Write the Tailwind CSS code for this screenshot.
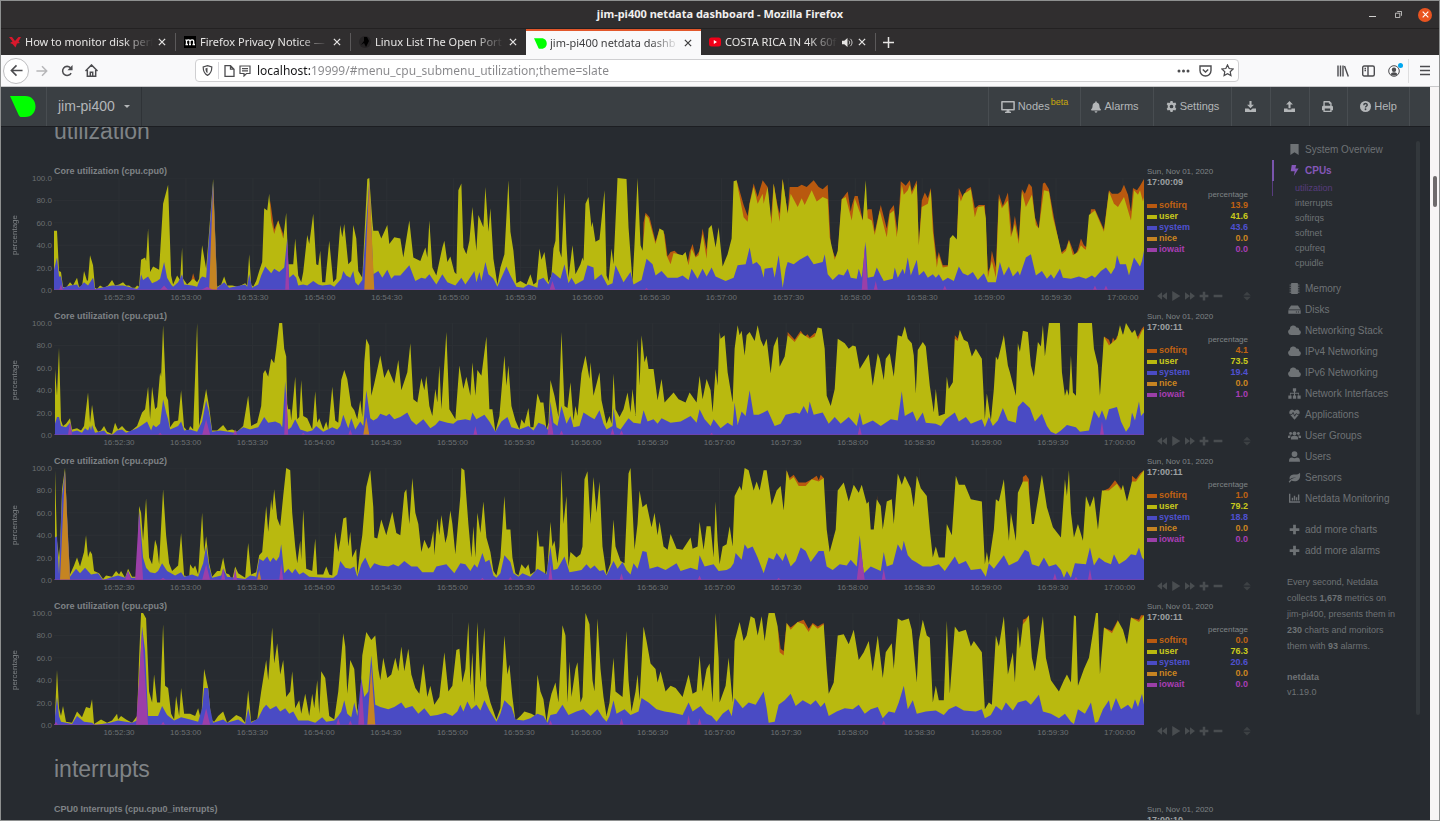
<!DOCTYPE html>
<html lang="en">
<head>
    <meta charset="UTF-8">
    <meta name="viewport" content="width=device-width, initial-scale=1.0">
    <title>jim-pi400 netdata dashboard</title>
    <script src="https://cdn.jsdelivr.net/npm/@tailwindcss/browser@4"></script>
</head>
<body class="bg-[#272b30] font-['Liberation_Sans',Arial,sans-serif] text-[#7f8386]">

    <!-- icon sprite -->
    <svg class="hidden" xmlns="http://www.w3.org/2000/svg">
        <symbol id="x" viewBox="0 0 16 16"><path d="M3 3l10 10M13 3L3 13" fill="none" stroke="currentColor" stroke-width="2"/></symbol>
        <symbol id="netdata" viewBox="0 0 26 21"><path d="M0 0h15c7 0 10.500 5 10.500 10.500S22 21 15 21h-4.500C9 20.500 8.500 18.500 7.500 16.500z" fill="#0f0"/></symbol>
        <symbol id="desktop" viewBox="0 0 16 14"><path fill-rule="evenodd" d="M1 0h14a1 1 0 011 1v9a1 1 0 01-1 1H9.500l.5 1.500h1.500V14h-7v-1.500H6L6.500 11H1a1 1 0 01-1-1V1a1 1 0 011-1zm.8 1.700v7.500h12.400V1.700z" fill="currentColor"/></symbol>
        <symbol id="bell" viewBox="0 0 14 16"><path d="M7 0a1 1 0 00-1 1v.600C3.500 2.200 2.200 4 2.200 6.500 2.200 9.500 1 10.200.4 11c-.8.9-.2 2 .8 2h11.600c1 0 1.600-1.100.8-2-.6-.8-1.800-1.500-1.800-4.500 0-2.500-1.300-4.300-3.800-4.900V1a1 1 0 00-1-1zM5 14a2 2 0 004 0z" fill="currentColor"/></symbol>
        <symbol id="cog" viewBox="0 0 16 16"><path fill-rule="evenodd" d="M6.500 0h3l.5 2.200 1.400.8 2.100-.7 1.500 2.600L13.400 6.400v1.700l0 1.500L15 11.100l-1.500 2.600-2.100-.7-1.400.8-.5 2.200h-3L6 13.800 4.600 13l-2.100.7L1 11.100l1.600-1.500V6.400L1 4.900l1.500-2.600 2.100.7L6 2.200zM8 5.300a2.700 2.700 0 100 5.400 2.700 2.700 0 000-5.400z" fill="currentColor"/></symbol>
        <symbol id="download" viewBox="0 0 16 16"><path d="M6.500 0h3v5.500h3.500L8 10.700 3 5.500h3.500zM0 11h5l3 2.500 3-2.500h5v5H0z" fill="currentColor"/></symbol>
        <symbol id="upload" viewBox="0 0 16 16"><path d="M6.500 10.500h3V5.200H13L8 0 3 5.200h3.500zM0 11h5.200v1.300h5.600V11H16v5H0z" fill="currentColor"/></symbol>
        <symbol id="print" viewBox="0 0 16 16"><path fill-rule="evenodd" d="M2 1a1 1 0 011-1h8l3 3v4a2 2 0 012 2v4.500h-2V16H2v-2.500H0V9a2 2 0 012-2zm2 1v5h8V4h-2V2zm0 9v3h8v-3z" fill="currentColor"/></symbol>
        <symbol id="help" viewBox="0 0 16 16"><circle cx="8" cy="8" r="8" fill="currentColor"/><path d="M5.500 6C5.500 3 10.500 3 10.500 5.800 10.500 7.800 8 7.500 8 9.500" fill="none" stroke="#3a3f44" stroke-width="2"/><circle cx="8" cy="12" r="1.300" fill="#3a3f44"/></symbol>
        <symbol id="bookmark" viewBox="0 0 16 16"><path d="M2 0h12v16l-6-4-6 4z" fill="currentColor"/></symbol>
        <symbol id="bolt" viewBox="0 0 16 16"><path d="M4 0h6.500L9.200 5H14L7 16l1.300-7H2.500z" fill="currentColor"/></symbol>
        <symbol id="chip" viewBox="0 0 16 16"><path d="M4 0h8a1 1 0 011 1v14a1 1 0 01-1 1H4a1 1 0 01-1-1V1a1 1 0 011-1zM1 2h1.500v2H1zm0 3.500h1.500v2H1zM1 9h1.500v2H1zm0 3.500h1.500v2H1zM13.500 2H15v2h-1.500zm0 3.500H15v2h-1.500zm0 3.500H15v2h-1.500zm0 3.500H15v2h-1.500z" fill="currentColor"/></symbol>
        <symbol id="hdd" viewBox="0 0 18 16"><path fill-rule="evenodd" d="M4 2h10l4 6H0zM0 9h18v5H0zm11 1.800v1.400h1.500v-1.400zm3 0v1.400h1.500v-1.400z" fill="currentColor"/></symbol>
        <symbol id="cloud" viewBox="0 0 20 16"><path d="M5 15a5 5 0 01-2-9.500A5.200 5.200 0 0113 3.500a3 3 0 014 3.700A4 4 0 0116 15z" fill="currentColor"/></symbol>
        <symbol id="sitemap" viewBox="0 0 20 16"><path d="M7.500 0h5v5h-1.700v2H17v4h2.500v5h-5v-5H16V8.500h-5.200V11h1.700v5h-5v-5h1.700V8.500H4V11h1.500v5h-5v-5H3V7h6.200V5H7.500z" fill="currentColor"/></symbol>
        <symbol id="heart" viewBox="0 0 16 16"><path d="M1 7.500C-.5 4.500 1 1 4.300 1 6 1 7.200 2 8 3c.8-1 2-2 3.700-2C15 1 16.500 4.500 15 7.500L8 15.500z" fill="currentColor"/><path d="M0 7.800h4.500L6 5l2.300 5.500L10 7h1.500l.6.800H16" fill="none" stroke="#272b30" stroke-width="1.200"/></symbol>
        <symbol id="group" viewBox="0 0 20 16"><circle cx="4" cy="5" r="2.200" fill="currentColor"/><circle cx="16" cy="5" r="2.200" fill="currentColor"/><circle cx="10" cy="5" r="3" fill="currentColor"/><path d="M0 12V9.500C0 8 1 7.700 4.500 8 3.500 9.500 3.500 10.500 3.500 12zM20 12V9.500C20 8 19 7.700 15.500 8c1 1.500 1 2.500 1 4zM4.500 14v-2c0-2.500 2-3.500 5.500-3.500s5.500 1 5.500 3.500v2z" fill="currentColor"/></symbol>
        <symbol id="user" viewBox="0 0 16 16"><circle cx="8" cy="4.500" r="4.200" fill="currentColor"/><path d="M0 15.500c0-4 1-6 4.500-6 2 1.300 5 1.300 7 0 3.500 0 4.500 2 4.500 6z" fill="currentColor"/></symbol>
        <symbol id="leaf" viewBox="0 0 18 16"><path d="M17 1c1 8-1.500 12.500-8 12.500-2 0-3.500-.5-4.500-1.200L2 15.500.5 14.200C3 10 7 8.500 11.500 8 7 7.500 4 9 2 11 1 5 5 3.500 9.500 3.500 13 3.500 15.500 3 17 1z" fill="currentColor"/></symbol>
        <symbol id="bars" viewBox="0 0 16 16"><path d="M0 1h2v11h14v2H0zM4 7h2v4H4zm3-3h2v7H7zm3 2h2v5h-2zm3-4h2v9h-2z" fill="currentColor"/></symbol>
        <symbol id="plus" viewBox="0 0 16 16"><path d="M6 1h4v5h5v4h-5v5H6v-5H1V6h5z" fill="currentColor"/></symbol>
        <symbol id="minus" viewBox="0 0 16 16"><path d="M1 6h14v4H1z" fill="currentColor"/></symbol>
        <symbol id="back" viewBox="0 0 16 16"><path d="M8 2v12L0 8zM16 2v12L8 8z" fill="currentColor"/></symbol>
        <symbol id="fwd" viewBox="0 0 16 16"><path d="M8 2v12l8-6zM0 2v12l8-6z" fill="currentColor"/></symbol>
        <symbol id="play" viewBox="0 0 16 16"><path d="M2 0l13 8-13 8z" fill="currentColor"/></symbol>
        <symbol id="sort" viewBox="0 0 16 16"><path d="M8 1l6 6H2zM8 15l6-6H2z" fill="currentColor"/></symbol>
    </svg>

    <div class="flex h-screen flex-col overflow-hidden border border-[#8e9090]">

        <!-- window title -->
        <header class="font-['Noto_Sans','Open_Sans',sans-serif]">
            <div class="grid h-7 grid-cols-[1fr_auto_1fr] items-center border-b border-[#232122] bg-[#302e2f] text-[#f0efee]">
                <span></span>
                <h1 class="text-[11px] font-bold">jim-pi400 netdata dashboard - Mozilla Firefox</h1>
                <div class="flex items-center justify-end gap-[14px] pr-[7px]">
                    <button aria-label="Minimize" class="flex h-3 w-3 items-center justify-center"><span class="mt-1 h-px w-[7px] bg-[#d0cfce]"></span></button>
                    <button aria-label="Restore" class="flex w-3 justify-center"><svg class="h-[7px] w-[7px]" viewBox="0 0 8 8" fill="none" stroke="#d0cfce"><path d="M.5 2.500h5v5h-5zM2.500.5h5v5"/></svg></button>
                    <button aria-label="Close window" class="flex h-[14px] w-[14px] items-center justify-center rounded-full bg-[#e95420]"><svg class="h-[9px] w-[9px] text-white"><use href="#x"/></svg></button>
                </div>
            </div>

            <!-- tabs -->
            <div class="flex h-[26px] items-stretch bg-[#302e2f] text-[11px] text-[#e6e5e4]">
                <div class="my-1 flex w-[175px] items-center gap-1 border-r border-[#5b595a] px-2">
                    <svg class="h-3 w-3 shrink-0" viewBox="0 0 12 12"><path d="M0 1h3l3 4 3.500-4H12L9.500 5.500 11 7 8 7.500 6.500 11.500 3.500 8 1 7l2.500-1.500z" fill="#d8182c"/></svg>
                    <a href="#" class="flex-1 overflow-hidden whitespace-nowrap [mask-image:linear-gradient(to_left,transparent,black_30px)]">How to monitor disk perf</a>
                    <button aria-label="Close tab"><svg class="h-[10px] w-[10px]"><use href="#x"/></svg></button>
                </div>
                <div class="my-1 flex w-[175px] items-center gap-1 border-r border-[#5b595a] px-2">
                    <svg class="h-3 w-3 shrink-0" viewBox="0 0 12 12"><path d="M0 0h12v12H0z" fill="#000"/><path d="M1.500 8.500h2.500M5 8.500h2M8.500 8.500h2.500M2.500 8.500V4M6 8.500V5c0-1.500-2.500-1.500-3.500 0M9.700 8.500V5c0-1.500-2.500-1.500-3.700 0M1.500 4h1" fill="none" stroke="#fff" stroke-width="1.300"/></svg>
                    <a href="#" class="flex-1 overflow-hidden whitespace-nowrap [mask-image:linear-gradient(to_left,transparent,black_30px)]">Firefox Privacy Notice —</a>
                    <button aria-label="Close tab"><svg class="h-[10px] w-[10px]"><use href="#x"/></svg></button>
                </div>
                <div class="my-1 flex w-[175px] items-center gap-1 px-2">
                    <svg class="h-3 w-3 shrink-0" viewBox="0 0 12 12"><circle cx="6" cy="6" r="6" fill="#252324"/><path d="M5 1h3l2 4-3 6-2-4-3 2 3-4z" fill="#000"/></svg>
                    <a href="#" class="flex-1 overflow-hidden whitespace-nowrap [mask-image:linear-gradient(to_left,transparent,black_30px)]">Linux List The Open Port</a>
                    <button aria-label="Close tab"><svg class="h-[10px] w-[10px]"><use href="#x"/></svg></button>
                </div>
                <div class="flex w-[175px] items-center gap-[3px] border-t-2 border-[#e2572b] bg-[#f9f9fa] px-2 text-[#3d3d3f]">
                    <svg class="h-[11px] w-[13px] shrink-0"><use href="#netdata"/></svg>
                    <a href="#" class="flex-1 overflow-hidden whitespace-nowrap [mask-image:linear-gradient(to_left,transparent,black_30px)]">jim-pi400 netdata dashb</a>
                    <button aria-label="Close tab"><svg class="h-[10px] w-[10px]"><use href="#x"/></svg></button>
                </div>
                <div class="my-1 flex w-[175px] items-center gap-1 border-r border-[#5b595a] px-2">
                    <svg class="h-3 w-3 shrink-0" viewBox="0 0 12 12"><rect y="1.500" width="12" height="9" rx="2.500" fill="#f00018"/><path d="M4.800 4v4L8 6z" fill="#fff"/></svg>
                    <a href="#" class="flex-1 overflow-hidden whitespace-nowrap [mask-image:linear-gradient(to_left,transparent,black_30px)]">COSTA RICA IN 4K 60f</a>
                    <button aria-label="Mute tab"><svg class="h-[11px] w-[11px]" viewBox="0 0 12 12"><path d="M0 4h2.500L6 1v10L2.500 8H0z" fill="currentColor"/><path d="M7.500 4c1 1 1 3 0 4M9 2c2.500 2 2.500 6 0 8" fill="none" stroke="currentColor"/></svg></button>
                    <button aria-label="Close tab"><svg class="h-[10px] w-[10px]"><use href="#x"/></svg></button>
                </div>
                <button aria-label="New tab" class="px-[7px]"><svg class="h-[11px] w-[11px]" viewBox="0 0 11 11"><path d="M5.500 0v11M0 5.500h11" stroke="currentColor" stroke-width="1.500"/></svg></button>
            </div>

            <!-- toolbar -->
            <div class="flex h-8 items-center border-b border-[#c9c9cb] bg-[#f9f9fa] pl-[2px] pr-[9px] text-[#4c4c4f]">
                <button aria-label="Back" class="flex h-[26px] w-[26px] items-center justify-center rounded-full border border-[#bebec0] bg-white"><svg class="h-[13px] w-[13px]" viewBox="0 0 14 14" fill="none" stroke="currentColor" stroke-width="1.700"><path d="M13.500 7H1.500M7 1.500L1.500 7 7 12.500"/></svg></button>
                <button aria-label="Forward" class="ml-[7px] text-[#b6b6b8]"><svg class="h-3 w-3" viewBox="0 0 14 14" fill="none" stroke="currentColor" stroke-width="1.700"><path d="M.5 7h12M7 1.500L12.500 7 7 12.500"/></svg></button>
                <button aria-label="Reload" class="ml-[13px]"><svg class="h-3 w-3" viewBox="0 0 14 14"><path d="M11.800 9.500A5.300 5.300 0 1111 3.200" fill="none" stroke="currentColor" stroke-width="1.800"/><path d="M13.500 0v6h-6z" fill="currentColor"/></svg></button>
                <button aria-label="Home" class="ml-[12px]"><svg class="h-[13px] w-[13px]" viewBox="0 0 14 14" fill="none" stroke="currentColor" stroke-width="1.600"><path d="M.5 7.500L7 1l6.500 6.500M2.500 6.500v6.700h9V6.500M5.700 13V9h2.600v4"/></svg></button>
                <div class="ml-[97px] flex h-[23px] min-w-0 flex-1 items-center rounded border border-[#cfcfd1] bg-white pl-[6px] pr-1">
                    <svg class="h-[11px] w-[11px] shrink-0" viewBox="0 0 12 12"><path d="M6 .7l4.700 1.500c0 5-1.500 7.500-4.700 9.100C2.800 9.700 1.300 7.200 1.300 2.200z" fill="none" stroke="currentColor" stroke-width="1.300"/><path d="M6 3v6c-1.500-1-2.200-2.600-2.300-5.200z" fill="currentColor"/></svg>
                    <span class="mx-[5px] h-[17px] w-px bg-[#d7d7db]"></span>
                    <svg class="h-3 w-[11px] shrink-0" viewBox="0 0 11 12" fill="none" stroke="currentColor" stroke-width="1.300"><path d="M1 .7h5.500L10 4.200v7.100H1zM6.500.7v3.500H10"/></svg>
                    <svg class="ml-1 h-3 w-3 shrink-0" viewBox="0 0 12 12" fill="none" stroke="currentColor" stroke-width="1.200"><path d="M1 1h10v7.500H7.500L5 11V8.500H1zM3 3.700h6M3 5.800h6"/></svg>
                    <label for="url" class="sr-only">Address</label>
                    <input id="url" type="text" value="localhost:19999/#menu_cpu_submenu_utilization;theme=slate" class="ml-[6px] min-w-0 flex-1 bg-[linear-gradient(to_right,#151517_53px,#87878a_53px)] bg-clip-text text-[12px] text-transparent outline-none">
                    <button aria-label="Page actions"><svg class="h-3 w-[13px]" viewBox="0 0 13 12" fill="currentColor"><circle cx="2" cy="6" r="1.500"/><circle cx="6.500" cy="6" r="1.500"/><circle cx="11" cy="6" r="1.500"/></svg></button>
                    <button aria-label="Save to Pocket" class="ml-[9px]"><svg class="h-3 w-[13px]" viewBox="0 0 13 12" fill="none" stroke="currentColor" stroke-width="1.400"><path d="M1 1h11v4.500a5.500 5.500 0 01-11 0zM3.800 4.500l2.700 2.600 2.700-2.600"/></svg></button>
                    <button aria-label="Bookmark page" class="ml-[9px]"><svg class="h-[13px] w-[13px]" viewBox="0 0 14 14" fill="none" stroke="currentColor" stroke-width="1.300"><path d="M7 1l1.800 3.900 4.200.5-3.100 2.900.8 4.200L7 10.400l-3.700 2.100.8-4.200L1 5.400l4.200-.5z"/></svg></button>
                </div>
                <button aria-label="Library" class="ml-[98px]"><svg class="h-3 w-3" viewBox="0 0 12 12" stroke="currentColor" stroke-width="1.400"><path d="M1 .5v11M3.500.5v11M6 .5v11M7.500 1l3.800 10.500"/></svg></button>
                <button aria-label="Sidebars" class="ml-[13px]"><svg class="h-3 w-[13px]" viewBox="0 0 13 12" fill="none" stroke="currentColor" stroke-width="1.400"><rect x=".7" y="1" width="11.600" height="10" rx="1.500"/><path d="M6 1v10M2.500 3.500H4M2.500 5.500H4"/></svg></button>
                <button aria-label="Account" class="relative ml-[13px]"><svg class="h-3 w-3" viewBox="0 0 12 12"><circle cx="6" cy="6" r="5.300" fill="none" stroke="currentColor"/><circle cx="6" cy="4.700" r="2.200" fill="currentColor"/><path d="M2.500 9.300c1-2.800 6-2.800 7 0C8 11 4 11 2.500 9.300z" fill="currentColor"/></svg><span class="absolute -right-[3px] -top-[2px] h-[5px] w-[5px] rounded-full bg-[#00a7ef]"></span></button>
                <span class="ml-[8px] mr-[11px] h-6 w-px bg-[#dededf]"></span>
                <button aria-label="Menu"><svg class="h-[11px] w-[10px]" viewBox="0 0 10 11" stroke="currentColor" stroke-width="1.600"><path d="M0 1.500h10M0 5.500h10M0 9.500h10"/></svg></button>
            </div>
        </header>

        <div class="flex min-h-0 flex-1">
            <div class="flex min-w-0 flex-1 flex-col">

                <!-- navbar -->
                <nav class="flex h-10 shrink-0 items-stretch border-b border-[#1c1e22] bg-[#3a3f43] pr-5 text-[11px] text-[#b3b6b8]">
                    <a href="#" aria-label="netdata" class="flex w-[46px] items-center border-r border-[#484d51] pl-[9px]"><svg class="h-[21px] w-[26px]"><use href="#netdata"/></svg></a>
                    <button class="flex items-center gap-[9px] border-r border-[#2f3337] pl-[11px] pr-[11px] text-[14px]">jim-pi400 <svg class="h-[3px] w-[6px]" viewBox="0 0 6 3"><path d="M0 0h6L3 3z" fill="currentColor"/></svg></button>
                    <div class="ml-auto flex [&>*]:flex [&>*]:items-center [&>*]:justify-center [&>*]:gap-[3px] [&>*]:border-r [&>*]:border-[#484d51]">
                        <span class="w-px"></span>
                        <a href="#" class="w-[92px]"><svg class="h-3 w-[14px]"><use href="#desktop"/></svg>Nodes<span class="-ml-[2px] mb-2 text-[9px] text-[#c9a80c]">beta</span></a>
                        <a href="#" class="w-[73px] pr-1"><svg class="h-3 w-[10px]"><use href="#bell"/></svg>Alarms</a>
                        <a href="#" class="w-[78px]"><svg class="h-[11px] w-[11px]"><use href="#cog"/></svg>Settings</a>
                        <button aria-label="Import snapshot" class="w-[39px] pr-[2px]"><svg class="h-[11px] w-[11px]"><use href="#download"/></svg></button>
                        <button aria-label="Export snapshot" class="w-[39px] pr-[2px]"><svg class="h-[11px] w-[11px]"><use href="#upload"/></svg></button>
                        <button aria-label="Print" class="w-[38px] pr-[2px]"><svg class="h-[11px] w-[11px]"><use href="#print"/></svg></button>
                        <a href="#" class="w-[62px]"><svg class="h-[11px] w-[11px]"><use href="#help"/></svg>Help</a>
                    </div>
                </nav>

                <div class="flex min-h-0 flex-1 overflow-hidden">
                    <main class="min-w-0 flex-1">
                        <h2 class="-mt-[9px] ml-[53px] text-[23px] leading-[26px]">utilization</h2>
                        <div id="charts" class="mt-[22px]"></div>
                        <h2 class="ml-[53px] mt-[10px] text-[23px] leading-[26px]">interrupts</h2>
                        <div class="mt-[22px] flex pl-[53px] text-[8px] leading-[11px]">
                            <h3 class="flex-1 text-[9px] font-bold">CPU0 Interrupts (cpu.cpu0_interrupts)</h3>
                            <div class="w-[102px]">Sun, Nov 01, 2020<br><b class="text-[9px] text-[#9da0a3]">17:00:10</b></div>
                        </div>
                    </main>

                    <!-- sidebar -->
                    <aside class="ml-[23px] mt-[14px] flex w-[158px] items-start">
                        <div class="flex-1 text-[10px] text-[#6e7275]">
                            <ul id="menu" class="-mt-[2px]"></ul>
                            <p class="ml-[15px] mt-[13px] text-[9px] leading-4">Every second, Netdata<br>collects <b>1,678</b> metrics on<br>jim-pi400, presents them in<br><b>230</b> charts and monitors<br>them with <b>93</b> alarms.</p>
                            <p class="ml-[15px] mt-4 text-[9px] leading-[15px]"><b>netdata</b><br>v1.19.0</p>
                        </div>
                        <div class="mr-[10px] h-[574px] w-1 rounded bg-[#33383c]"></div>
                    </aside>
                </div>
            </div>

            <!-- page scrollbar -->
            <div class="w-[9px] bg-[#f7f5f5] pt-[89px]"><div class="mx-auto h-[31px] w-1 rounded bg-[#6d6a6b]"></div></div>
        </div>
    </div>

    <script>
        const icon = (id, cls) => `<svg class="${cls}"><use href="#${id}"/></svg>`;

        // sidebar menu
        const menu = [
            ['bookmark', 'System Overview'], ['bolt', 'CPUs', ['utilization', 'interrupts', 'softirqs', 'softnet', 'cpufreq', 'cpuidle']],
            ['chip', 'Memory'], ['hdd', 'Disks'], ['cloud', 'Networking Stack'], ['cloud', 'IPv4 Networking'], ['cloud', 'IPv6 Networking'],
            ['sitemap', 'Network Interfaces'], ['heart', 'Applications'], ['group', 'User Groups'], ['user', 'Users'], ['leaf', 'Sensors'],
            ['bars', 'Netdata Monitoring'], ['plus', 'add more charts'], ['plus', 'add more alarms'],
        ];
        document.getElementById('menu').innerHTML = menu.map(([ic, name, subs]) => {
            const row = `<a href="#" class="flex h-[21px] items-center gap-1 whitespace-nowrap pl-4">${icon(ic, 'h-[11px] w-[13px]')}${name}</a>`;
            if (!subs) return `<li class="${name === 'add more charts' ? 'mt-[10px]' : ''}">${row}</li>`;
            const list = subs.map((s, j) => `<li><a href="#" class="block pl-[22px] border-l ${j ? 'border-transparent' : 'border-[#573c7e] text-[#573c7e]'}">${s}</a></li>`).join('');
            return `<li><div class="border-l-2 border-[#7a55ad] font-bold text-[#8457b8] -mr-1"><div class="-ml-[2px]">${row}</div></div>
                <ul class="mb-[7px] text-[9px] leading-[15px]">${list}</ul></li>`;
        }).join('');

        // series: "seconds-axis position,percent"; nice and iowait: "center,half width,percent"
        const charts = [
            {
                id: 'cpu0', time: '17:00:09', step: 6.14, values: [13.9, 41.6, 43.6, 0, 0],
                softirq: '730,0 736,98 743,76 747,66 749,78 753,95 757,83 762,98 767,92 770,60 773,95 777,75 779,68 782,99 787,68 789,92 797,92 801,94 806,92 813,98 818,92 822,90 827,94 830,40 834,30 837,30 841,81 847,88 850,70 851,75 854,84 857,84 862,62 867,72 871,72 874,52 880,76 886,55 889,71 893,76 897,50 900,97 905,93 909,98 911,88 916,98 918,40 921,80 924,87 927,82 930,91 933,50 936,27 938,34 942,22 947,22 956,45 958,91 962,83 966,90 970,92 974,73 978,76 984,76 987,16 989,20 991,35 995,20 998,86 1002,75 1007,87 1011,50 1014,66 1018,45 1021,90 1024,86 1028,95 1031,92 1034,65 1038,55 1042,95 1044,96 1048,90 1053,65 1060,33 1065,37 1068,45 1074,31 1077,36 1080,46 1083,40 1086,38 1090,72 1094,72 1097,66 1103,54 1108,89 1111,86 1117,86 1120,88 1123,94 1127,85 1130,70 1132,91 1136,89 1139,93 1143,99',
                extra: '188,0 191,8 193,15 196,6 198,0 266,0 270,80 274,54 278,62 283,50 285,0 642,0 643,60 645,69 649,65 655,43 659,55 664,50 667,30 670,34 674,35 687,24 689,34 692,41 695,30 699,35 702,55 706,36 708,53 710,0',
                user: '54,53 57,53 59,17 61,16 63,3 66,2 70,7 73,4 77,11 79,3 82,3 84,17 87,8 88,9 90,31 93,22 95,2 97,1 100,4 104,2 108,4 112,9 115,4 119,5 123,7 126,4 129,4 132,2 135,2 137,4 139,3 141,27 145,29 146,26 148,55 150,16 153,21 159,18 163,77 165,84 168,94 171,13 173,5 177,13 180,9 182,38 183,10 187,5 193,10 197,7 199,10 202,40 206,19 208,41 213,99 217,3 221,5 224,12 227,4 232,4 238,3 245,6 247,4 249,32 251,5 253,3 256,8 259,17 262,25 264,73 267,71 269,86 271,62 274,50 278,62 283,46 286,69 288,23 293,23 295,46 298,13 301,7 303,16 307,49 309,41 313,68 316,23 318,22 320,35 322,7 325,7 329,44 333,7 336,10 340,58 342,47 344,59 348,23 351,26 353,58 356,46 358,17 362,11 367,99 369,100 372,62 373,53 378,53 381,46 387,58 389,41 394,47 400,46 403,29 409,62 413,29 420,26 425,38 427,29 429,62 432,20 436,13 442,38 444,44 447,25 450,30 454,16 456,14 458,89 461,95 463,38 466,32 469,44 472,74 476,35 478,67 483,56 485,92 488,52 490,73 493,28 497,5 500,20 504,32 508,98 510,52 513,35 516,6 520,8 526,5 530,14 533,5 536,7 539,37 541,27 544,34 548,7 551,13 553,37 555,44 557,94 559,35 561,29 564,87 566,41 568,11 572,40 575,14 580,23 582,29 583,26 585,77 588,83 591,56 592,61 595,43 599,45 604,89 606,13 608,8 611,37 613,23 617,100 626,99 628,56 632,7 634,41 637,100 640,40 642,35 645,67 648,64 655,41 659,55 663,53 666,31 670,23 673,33 682,31 685,34 688,22 691,37 695,29 698,31 702,50 706,28 708,55 711,58 715,38 718,56 722,21 727,32 731,46 733,97 736,98 738,88 743,65 747,61 749,77 753,92 757,77 762,86 763,77 767,92 771,59 773,95 779,61 782,99 787,68 790,86 797,74 801,82 804,76 811,89 816,79 822,83 827,81 829,47 834,27 837,35 841,81 845,83 851,62 854,82 862,62 865,98 867,64 871,62 874,49 879,71 886,47 889,68 893,71 896,47 901,94 903,85 907,89 909,94 911,85 916,95 918,40 921,74 927,77 930,89 932,53 936,20 938,31 942,20 947,21 949,46 952,49 956,45 958,85 960,79 963,86 967,88 970,90 974,65 977,74 983,75 985,64 987,11 991,26 995,11 998,82 1001,73 1007,80 1010,47 1014,59 1018,41 1021,88 1025,74 1031,85 1035,58 1038,55 1043,89 1048,88 1052,65 1057,47 1061,32 1065,35 1068,44 1072,31 1077,34 1080,40 1083,37 1085,36 1088,67 1094,71 1103,52 1108,88 1113,77 1117,74 1123,83 1130,62 1133,89 1137,85 1139,89 1142,79 1143,83',
                system: '54,18 57,29 59,12 61,12 63,2 70,4 77,5 79,2 84,7 88,4 93,11 95,1 112,4 123,4 137,1 139,3 141,14 143,9 148,12 152,6 157,8 160,10 164,25 167,11 171,5 173,3 178,7 182,14 184,5 192,4 197,3 200,10 202,12 206,11 208,36 213,97 217,2 224,7 229,2 245,5 247,3 249,14 252,2 258,5 261,13 265,21 271,15 274,19 279,16 284,20 287,46 289,11 293,14 296,11 298,4 303,5 307,4 313,8 318,5 322,4 330,5 334,3 341,10 343,17 346,13 350,11 353,17 355,7 358,4 362,9 369,98 373,14 378,17 382,11 387,18 391,10 394,13 400,13 409,22 415,8 421,11 425,10 429,14 436,5 442,14 447,7 455,4 461,11 465,5 472,14 474,17 476,7 479,16 481,8 485,25 488,14 493,10 497,3 501,11 506,21 510,13 516,3 523,2 528,5 537,2 538,9 543,11 548,5 552,16 560,10 564,23 568,6 571,11 575,5 583,9 587,22 593,20 594,9 601,14 607,4 612,6 615,22 623,7 630,16 633,5 641,9 646,28 652,23 655,13 661,17 667,11 677,11 682,13 688,9 691,19 697,10 702,19 706,12 711,20 715,12 725,8 733,11 737,22 745,23 749,38 752,23 756,25 760,21 763,11 764,19 772,20 774,11 778,31 780,17 782,2 785,19 787,25 793,23 799,27 807,31 813,23 822,25 824,32 827,14 832,9 838,14 843,13 847,19 850,11 856,10 858,19 861,11 865,43 867,11 873,12 876,20 880,13 883,8 892,10 894,20 897,11 902,19 904,14 907,29 910,13 916,27 918,13 923,17 927,11 932,14 935,11 938,14 942,8 947,11 953,8 958,21 962,15 967,13 972,16 977,9 983,15 987,7 995,7 999,25 1003,13 1008,21 1012,12 1017,17 1019,13 1025,29 1030,32 1035,13 1041,17 1046,10 1050,14 1053,10 1059,19 1062,11 1070,10 1078,12 1085,10 1091,13 1094,11 1100,17 1105,20 1110,14 1114,20 1116,31 1119,23 1125,23 1128,13 1133,29 1139,21 1141,26 1143,35',
                nice: '213,4,93 369,5,97',
                iowait: '61,2,5 164,4,4 207,6,3 287,2,44 441,2,1 552,3,8 646,2,2 864,3,40 875,2,8 944,2,4 1094,2,4 1105,2,4',
            },
            {
                id: 'cpu1', time: '17:00:11', step: 6.12, values: [4.1, 73.5, 19.4, 0, 1],
                softirq: '784,0 787,92 794,85 800,93 804,88 807,90 809,87 814,91 817,90 821,90 824,0 953,0 954,89 957,86 959,93 961,0 1000,0 1003,92 1006,0 1100,0 1103,88 1108,85 1110,80 1112,87 1114,84 1116,88 1119,90 1122,90 1130,91 1137,88 1141,95 1143,97',
                extra: '',
                user: '55,59 57,35 59,78 61,13 63,8 66,10 70,15 72,5 77,6 81,4 84,8 88,38 90,11 92,27 95,8 98,3 101,4 104,8 107,3 112,1 115,11 118,5 122,8 126,4 130,3 137,8 142,20 145,23 148,43 150,14 152,43 155,23 157,25 160,56 161,52 163,98 166,35 168,31 170,7 174,12 178,13 181,40 184,7 188,3 190,8 193,5 197,100 199,8 202,20 206,41 209,25 212,4 217,4 223,9 227,4 232,5 237,3 243,8 248,35 251,8 257,11 261,26 263,55 265,58 268,52 271,68 274,64 276,77 279,100 282,100 284,77 286,70 287,28 288,23 290,23 291,13 295,52 297,14 299,16 301,49 303,17 307,15 312,5 315,39 317,11 319,15 323,5 326,12 328,5 332,43 335,13 338,11 341,49 344,58 347,50 351,26 354,22 357,14 360,31 362,16 364,65 366,86 369,80 371,35 374,46 380,71 384,51 388,59 394,46 398,67 401,40 407,56 410,82 413,32 417,29 421,51 424,40 426,53 429,26 432,17 435,41 437,29 439,62 441,23 446,92 449,23 455,14 459,62 463,41 466,52 470,35 472,65 475,35 477,58 481,53 486,88 489,23 492,23 495,3 499,17 504,71 506,44 508,62 511,26 515,13 519,5 521,14 524,10 528,24 530,7 533,7 537,37 540,29 543,29 546,5 548,11 550,49 554,35 558,16 561,92 564,26 567,24 570,47 573,13 575,26 577,17 581,55 585,71 589,50 590,65 593,35 599,56 601,31 606,10 609,17 611,10 613,55 615,23 619,16 623,23 627,38 630,20 632,41 635,17 637,86 639,44 641,89 644,65 646,71 648,59 653,59 657,31 661,50 664,29 673,38 678,32 685,29 689,38 696,29 699,53 702,32 706,50 710,40 712,20 715,59 717,44 719,92 720,86 724,89 727,56 732,29 734,77 737,98 739,89 741,93 744,71 746,89 749,92 754,84 757,98 760,85 763,79 766,86 770,55 773,79 777,88 779,61 784,70 787,89 794,83 800,91 809,86 814,88 817,96 821,95 824,77 826,35 830,26 834,41 837,86 844,82 848,77 852,80 855,79 859,59 868,72 872,44 877,73 879,68 883,49 885,68 889,73 893,52 897,89 901,88 904,97 907,86 911,82 913,71 915,37 917,76 922,83 925,79 929,44 933,20 935,41 938,17 944,19 946,52 948,41 952,47 954,86 957,84 959,94 963,85 967,83 971,70 975,77 981,68 984,14 986,37 990,13 993,41 995,70 997,67 1003,89 1007,62 1009,56 1015,35 1017,82 1019,74 1022,93 1027,92 1030,62 1033,52 1037,83 1040,79 1042,98 1044,70 1048,100 1059,100 1061,56 1064,35 1066,41 1068,35 1070,71 1072,38 1075,35 1077,100 1091,100 1093,77 1097,62 1099,35 1103,88 1108,80 1112,83 1116,86 1119,98 1122,89 1125,100 1131,91 1134,94 1137,85 1141,93 1143,95',
                system: '55,10 57,16 59,16 61,8 66,7 70,11 72,3 77,4 82,2 85,6 88,4 90,8 91,4 92,9 95,2 104,4 107,1 112,0 117,4 122,5 126,2 137,6 142,9 147,12 151,4 153,9 156,7 160,10 163,32 166,20 168,14 170,5 178,8 181,12 184,4 190,5 197,3 202,12 206,31 209,20 212,3 220,4 228,3 235,2 243,7 250,5 258,7 264,16 268,11 275,12 280,10 282,7 285,48 288,5 291,7 295,14 300,5 307,3 312,4 316,8 323,3 332,7 337,5 340,8 343,18 348,6 351,15 355,5 360,12 363,8 366,40 370,15 373,13 377,15 380,19 386,17 389,19 394,14 400,16 407,20 411,13 416,9 423,14 430,6 435,9 439,13 447,11 453,10 457,13 465,14 470,13 472,20 476,14 484,18 489,12 495,3 501,12 507,16 511,7 519,5 528,8 533,4 538,11 544,9 548,4 550,30 553,11 557,8 561,26 566,10 570,17 573,7 579,8 583,20 590,16 594,14 599,22 603,10 606,5 612,8 613,24 616,7 620,5 628,15 633,11 640,10 643,22 647,12 653,14 657,10 661,15 670,11 680,12 690,17 696,11 699,23 704,14 710,8 713,14 720,6 727,11 732,8 734,29 737,9 741,21 745,17 749,40 753,18 758,18 767,22 774,8 780,10 785,18 795,20 799,19 803,26 807,19 809,30 813,18 822,20 828,10 834,16 840,10 848,16 856,8 859,20 862,9 872,13 880,8 890,14 897,13 901,39 904,17 912,21 916,12 922,20 925,11 935,10 940,8 945,14 954,20 958,12 965,16 970,10 981,14 984,7 988,16 992,8 997,13 1002,24 1007,13 1015,11 1017,25 1022,30 1029,24 1034,12 1041,19 1046,8 1050,3 1055,1 1060,4 1066,9 1075,7 1079,3 1088,4 1093,22 1098,15 1101,22 1105,13 1108,23 1116,25 1120,12 1125,3 1129,8 1131,20 1134,13 1138,30 1140,17 1143,20',
                nice: '366,3,16',
                iowait: '70,2,12 160,2,2 206,4,14 235,2,5 286,2,42 303,2,2 350,2,5 475,2,8 550,3,18 561,2,4 612,2,6 621,2,4 711,2,2 859,2,8 1101,2,12',
            },
            {
                id: 'cpu2', time: '17:00:11', step: 6.12, values: [1, 79.2, 18.8, 0, 0],
                softirq: '784,0 786,98 789,91 793,94 798,87 805,87 811,90 816,93 818,89 820,94 823,91 825,0 874,0 877,76 879,0 1019,0 1022,92 1025,94 1028,90 1030,0 1102,0 1103,80 1108,82 1114,89 1120,82 1124,0 1129,0 1131,93 1135,90 1139,95 1143,98',
                extra: '',
                user: '55,98 57,35 59,20 60,30 62,81 65,100 68,35 70,5 74,13 77,20 80,12 84,25 86,40 88,20 90,26 92,23 94,8 99,6 103,1 106,4 112,3 116,8 119,5 121,8 125,2 128,10 132,3 137,3 139,66 141,60 143,35 146,73 149,20 152,14 155,36 157,30 159,14 163,81 166,40 169,15 172,8 178,13 181,42 184,4 189,3 190,14 193,10 195,13 198,5 202,60 204,25 206,39 209,15 212,3 217,8 220,8 223,20 226,6 229,5 232,0 235,12 238,6 245,2 248,33 251,5 256,7 259,22 262,25 266,66 268,43 271,72 272,62 274,81 277,55 280,48 283,75 286,100 290,98 292,60 295,30 297,15 300,35 301,18 303,63 306,10 312,8 315,37 317,5 323,5 326,12 329,5 332,4 335,43 338,25 340,35 343,55 346,56 348,30 350,43 352,20 356,28 357,5 360,28 362,40 366,83 370,98 373,65 374,38 377,37 381,54 386,40 392,61 396,42 400,40 404,78 406,81 409,50 412,91 415,60 418,50 421,25 424,36 428,28 430,30 433,44 434,22 437,55 439,40 441,58 445,33 447,40 450,62 452,50 455,23 460,75 461,100 464,98 468,50 471,20 473,48 475,20 477,60 480,42 483,70 486,38 490,25 493,8 496,4 500,20 504,75 506,45 510,45 512,20 515,6 518,4 521,14 525,10 528,14 530,5 535,8 537,45 539,30 543,30 545,4 547,10 550,52 552,30 554,35 557,15 559,30 561,98 563,50 566,75 568,12 570,25 576,20 580,23 582,30 584,90 587,97 590,50 593,92 596,60 599,88 602,30 606,5 610,15 613,54 615,30 620,17 624,15 628,95 630,100 634,27 637,50 639,80 642,65 646,68 651,47 654,60 657,40 659,52 663,30 667,27 670,41 676,28 682,27 690,38 692,28 697,30 699,52 703,27 706,48 710,48 713,20 715,70 717,35 719,14 722,30 726,32 729,48 732,30 734,75 739,84 741,80 744,100 748,98 753,80 756,88 759,80 763,98 766,98 769,80 771,67 776,80 780,84 783,62 786,98 789,89 793,92 798,84 805,84 811,90 818,88 823,91 826,45 829,25 835,45 837,80 843,87 848,70 853,85 858,78 861,85 866,68 868,70 870,45 873,45 876,72 880,66 882,45 886,70 891,72 893,50 897,95 901,85 904,93 910,82 913,65 916,93 920,82 926,75 929,45 932,20 935,30 938,20 944,20 946,50 951,40 955,93 958,85 964,85 970,72 981,70 984,14 986,25 988,15 993,45 995,72 998,70 1003,90 1008,35 1010,60 1015,35 1017,78 1022,88 1027,88 1031,50 1033,50 1041,94 1046,65 1052,47 1060,38 1064,90 1066,75 1068,98 1070,60 1073,38 1077,50 1082,35 1085,75 1089,65 1093,75 1097,45 1101,80 1108,80 1116,86 1120,80 1122,85 1126,70 1131,88 1135,88 1139,93 1143,98',
                system: '55,38 57,39 59,5 62,75 65,98 67,60 70,3 76,10 80,6 85,11 91,5 98,6 103,0 110,2 118,4 125,2 128,8 131,2 137,2 139,62 143,20 146,11 150,7 155,6 158,8 162,15 167,8 175,4 181,7 184,3 192,5 198,3 203,15 206,30 209,12 212,2 221,4 223,10 227,3 245,1 250,4 256,3 259,19 263,17 267,21 270,16 273,20 276,17 279,21 281,32 284,6 288,10 292,6 295,10 299,5 303,7 309,3 325,2 333,2 337,5 340,17 345,11 350,10 354,12 357,3 361,14 365,20 370,10 374,15 380,13 388,12 393,14 398,12 404,17 411,12 417,12 422,7 433,7 436,12 446,14 454,6 460,15 465,14 470,8 474,14 477,11 482,24 485,16 489,18 493,4 496,2 500,6 504,22 510,16 513,6 518,3 522,6 530,3 537,10 543,7 546,5 550,30 553,9 557,10 564,21 569,7 576,8 581,9 586,14 590,10 594,13 599,8 603,9 606,4 613,17 617,10 622,16 626,9 630,5 633,15 637,10 642,26 646,25 649,10 657,12 665,9 676,15 680,8 690,11 697,9 699,22 704,12 713,14 718,8 726,9 730,11 733,15 735,24 741,18 744,32 747,28 752,30 757,20 763,6 768,20 773,18 776,24 782,17 785,24 790,12 795,17 800,29 805,26 810,16 818,26 823,26 826,12 832,9 839,14 846,13 850,18 856,12 859,40 863,6 870,12 880,8 883,25 886,12 892,14 897,32 901,26 903,35 907,22 911,18 915,16 922,12 930,12 938,14 944,8 954,21 958,14 965,17 970,9 980,10 985,3 988,15 993,10 1003,22 1008,13 1017,17 1024,27 1028,25 1031,14 1038,12 1043,20 1048,12 1055,14 1060,9 1063,2 1066,8 1070,2 1074,15 1085,14 1089,29 1093,13 1098,20 1104,16 1110,14 1113,23 1118,14 1125,18 1130,23 1135,22 1138,29 1141,20 1143,18',
                nice: '65,5,97 259,2,9',
                iowait: '128,3,8 139,4,60 163,3,2 206,4,14 223,2,11 235,2,10 281,2,15 482,2,2 510,2,3 550,2,14 621,2,6 699,2,4 778,2,2 860,4,28 883,2,10 1054,2,6 1075,2,3 1089,2,10',
            },
            {
                id: 'cpu3', time: '17:00:11', step: 6.12, values: [0, 76.3, 20.6, 0, 0],
                softirq: '776,0 777,88 780,68 783,66 786,91 790,87 797,92 803,94 808,86 812,91 817,88 823,91 826,0 1019,0 1022,94 1025,95 1028,98 1030,0 1101,0 1103,87 1111,84 1117,94 1124,0 1130,96 1138,94 1140,98 1143,98',
                extra: '',
                user: '55,10 57,49 59,15 61,8 63,17 66,3 72,2 77,12 82,7 86,16 90,15 92,23 94,1 101,5 107,2 112,4 117,10 118,5 121,8 126,5 132,2 137,8 139,60 141,100 143,100 146,95 149,30 152,20 154,45 157,20 160,20 163,90 165,35 168,33 171,10 174,5 176,26 179,8 181,33 184,10 190,10 195,8 198,15 201,4 204,50 208,33 211,5 214,3 218,8 223,12 227,2 236,9 241,7 245,2 248,31 251,3 257,5 261,30 266,58 268,40 272,87 274,55 277,73 280,45 283,58 286,25 290,30 292,48 295,15 299,22 301,10 305,28 309,8 312,28 314,15 317,40 319,10 321,48 325,42 329,8 334,5 338,30 343,82 345,70 347,28 350,58 354,50 357,12 360,25 362,62 366,83 371,76 375,80 378,50 380,40 383,60 387,42 391,45 395,60 398,48 401,70 404,48 408,68 411,45 415,33 419,28 423,55 427,25 430,35 434,18 439,25 444,65 448,30 452,35 456,67 459,68 462,38 465,50 468,92 470,35 472,65 474,20 477,92 480,38 484,87 486,35 490,20 496,5 500,15 504,80 507,45 509,54 512,25 515,4 520,8 524,12 531,10 535,8 537,45 540,30 543,23 546,3 549,20 551,28 555,38 558,20 562,89 565,80 567,20 569,57 571,25 575,50 577,56 580,20 582,25 585,100 589,90 592,40 594,30 597,95 600,50 603,25 606,8 609,20 613,60 615,30 622,25 626,84 628,40 631,12 635,30 637,45 639,22 643,88 646,75 650,55 655,50 657,38 660,48 665,30 670,35 675,33 682,25 688,45 692,28 696,30 699,62 702,30 706,50 709,55 712,20 715,100 718,60 719,20 725,35 728,60 732,20 734,75 739,92 743,75 746,80 750,97 754,95 757,80 761,97 764,75 767,95 768,100 774,100 777,88 779,65 783,62 786,91 790,85 797,92 803,90 808,83 812,90 817,86 823,90 826,50 828,28 833,38 837,80 843,81 848,72 853,85 858,58 863,65 868,75 872,48 877,80 882,42 885,65 891,73 893,50 897,95 901,93 908,95 911,85 916,38 918,75 922,94 926,80 929,78 932,20 935,35 938,22 943,22 946,93 949,28 954,88 958,83 965,85 970,70 973,75 981,65 984,14 988,20 991,18 995,80 998,70 1003,97 1007,45 1012,65 1014,38 1017,88 1019,68 1022,90 1025,93 1028,98 1031,60 1034,48 1042,97 1045,60 1050,40 1058,30 1063,40 1066,45 1070,38 1073,98 1075,97 1077,35 1083,50 1088,60 1095,100 1097,100 1099,45 1103,87 1111,82 1117,93 1122,85 1126,72 1130,96 1138,92 1143,98',
                system: '55,8 57,25 59,8 61,3 66,2 72,1 77,8 84,3 92,2 95,0 110,2 118,4 132,2 137,4 142,88 145,66 148,8 153,8 158,8 162,17 167,9 174,4 181,7 190,5 198,3 202,15 204,33 208,33 210,15 213,2 223,5 227,2 238,5 245,1 248,15 251,2 258,6 263,15 266,18 270,14 276,17 280,12 285,15 289,10 293,12 298,4 308,4 315,2 322,7 326,3 334,4 338,8 341,12 344,22 347,10 351,7 354,20 357,8 361,42 364,25 368,30 371,62 375,18 380,16 388,14 394,16 401,20 405,15 412,17 418,10 424,15 430,8 437,9 445,11 452,8 457,12 460,18 463,12 467,21 471,14 476,18 480,13 484,22 489,13 496,3 500,10 504,22 511,16 515,5 523,4 530,6 537,10 543,8 547,2 550,9 556,10 562,18 568,9 576,12 583,14 590,8 597,14 602,7 606,3 609,8 613,22 616,10 624,14 630,9 638,12 641,24 648,20 656,14 664,12 672,11 682,9 688,20 692,12 700,17 706,10 711,8 716,3 722,10 728,14 731,8 734,24 742,15 748,20 755,18 763,30 766,15 768,2 774,3 778,18 784,22 790,28 795,17 802,22 810,18 815,22 820,16 824,20 828,8 836,12 844,15 852,14 858,18 864,10 870,14 877,16 882,6 888,12 894,11 898,20 903,35 907,14 912,22 916,10 925,12 935,13 943,9 948,14 955,17 963,13 975,12 981,14 984,6 990,9 995,17 1001,13 1005,20 1012,13 1017,20 1025,22 1030,18 1038,27 1042,12 1050,10 1058,6 1064,10 1070,3 1073,1 1077,14 1084,10 1090,20 1094,2 1097,3 1102,14 1108,22 1110,12 1115,24 1120,14 1127,18 1131,14 1134,23 1137,16 1141,28 1143,18',
                nice: '371,4,52',
                iowait: '56,2,3 142,6,84 163,2,3 206,4,15 338,2,6 350,2,4 361,3,40 550,2,4 621,2,6 688,2,9 699,2,6 883,2,4',
            },
        ];

        const dims = [
            ['softirq', '#b9590f', 'text-[#c06212]'], ['user', '#b9b90f', 'text-[#c9c91c]'], ['system', '#4a4bc4', 'text-[#4f51d0]'],
            ['nice', '#c58422', 'text-[#cc8520]'], ['iowait', '#9b3fa8', 'text-[#a83db4]'],
        ];
        const times = ['16:52:30', '16:53:00', '16:53:30', '16:54:00', '16:54:30', '16:55:00', '16:55:30', '16:56:00', '16:56:30',
            '16:57:00', '16:57:30', '16:58:00', '16:58:30', '16:59:00', '16:59:30', '17:00:00'];

        const area = pts => {
            const p = pts.split(' ');
            return `M${p[0].split(',')[0]},0 L${p.join(' ')} V0Z`;
        };
        const spikes = list => list.split(' ').map(s => {
            const [c, w, v] = s.split(',').map(Number);
            return `M${c - w},0 L${c},${v} ${c + w},0Z`;
        }).join('');

        const plot = c => {
            const grid = times.map((t, i) => `M${119 + i * c.step * 10.890},0V100`).join('') + [20, 40, 60, 80, 100].map(v => `M54,${v}H1143`).join('');
            const paths = { softirq: area(c.softirq) + (c.extra ? area(c.extra) : ''), user: area(c.user), system: area(c.system), nice: spikes(c.nice), iowait: spikes(c.iowait) };
            return `<svg class="mt-[2px] block h-[112px] w-full" viewBox="54 0 1089 100" preserveAspectRatio="none"><g transform="translate(0 100) scale(1 -1)">
                <path d="${grid}" fill="none" stroke="#2d3135" vector-effect="non-scaling-stroke"/>
                ${dims.map(([n, color]) => `<path d="${paths[n]}" fill="${color}"/>`).join('')}
                <path d="M54,0H1143" stroke="#8a3fa0" stroke-width="1"/></g></svg>`;
        };

        document.getElementById('charts').innerHTML = charts.map(c => `
            <section class="flex h-[145px] text-[8px]">
                <div class="flex h-[130px] w-[53px] justify-between pr-[2px] pt-2">
                    <span class="ml-[9px] flex-none self-center [writing-mode:vertical-rl] rotate-180 leading-[10px]">percentage</span>
                    <div class="flex flex-col justify-between text-right leading-[10px] text-[#6b6f72]">${[100, 80, 60, 40, 20, 0].map(v => `<span>${v}.0</span>`).join('')}</div>
                </div>
                <div class="min-w-0 flex-1">
                    <h3 class="text-[9px] font-bold leading-[10px]">Core utilization (cpu.${c.id})</h3>
                    ${plot(c)}
                    <div class="mt-[3px] flex whitespace-nowrap text-center leading-[10px] text-[#6b6f72]"><span class="w-[2.9%] shrink-0"></span>
                        ${times.map(t => `<span class="flex shrink-0 justify-center" style="width:${c.step}%">${t}</span>`).join('')}</div>
                </div>
                <div class="ml-[3px] flex w-[102px] flex-col pr-px leading-[11px]">
                    <p>Sun, Nov 01, 2020</p>
                    <p class="text-[9px] font-bold text-[#9da0a3]">${c.time}</p>
                    <p class="mt-px text-right">percentage</p>
                    <table class="w-full text-[9px] font-bold">${dims.map(([n, color, cls], i) => `<tr class="${cls}"><td><i class="mr-[2px] inline-block h-1 w-[10px]" style="background:${color}"></i>${n}</td><td class="text-right">${c.values[i].toFixed(1)}</td></tr>`).join('')}</table>
                    <div class="-mr-1 mt-9 flex items-center gap-1 pl-[10px] text-[#494d50]">
                        ${[['back', 'Pan back'], ['play', 'Play'], ['fwd', 'Pan forward'], ['plus', 'Zoom in'], ['minus', 'Zoom out']].map(([ic, l]) => `<button aria-label="${l}">${icon(ic, 'h-[10px] w-[10px]')}</button>`).join('')}
                        <button aria-label="Resize" class="ml-auto text-[#3d4144]">${icon('sort', 'h-[10px] w-[10px]')}</button>
                    </div>
                </div>
            </section>`).join('');
    </script>
</body>
</html>
